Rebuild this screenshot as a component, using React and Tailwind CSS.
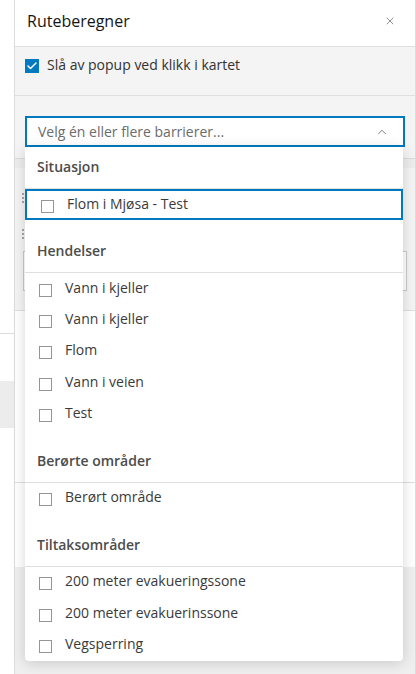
import { Check, X, ChevronUp } from 'lucide-react'

const GROUPS = [
  { title: 'Situasjon', items: ['Flom i Mjøsa - Test'], focused: 0 },
  { title: 'Hendelser', items: ['Vann i kjeller', 'Vann i kjeller', 'Flom', 'Vann i veien', 'Test'] },
  { title: 'Berørte områder', items: ['Berørt område'] },
  { title: 'Tiltaksområder', items: ['200 meter evakueringssone', '200 meter evakuerinssone', 'Vegsperring'] },
]

function Grip() {
  return (
    <div className="grid grid-cols-2 gap-x-[2px] gap-y-[2px] w-[6px]">
      {[0, 1, 2, 3, 4, 5].map(i => (
        <span key={i} className="w-[2px] h-[2px] rounded-full bg-[#8a8a8a]" />
      ))}
    </div>
  )
}

function OptionRow({ label, focused }) {
  return (
    <div
      className={`h-[31.25px] flex items-center pl-[14px] gap-[13px] ${
        focused ? 'border-2 border-[#0079c1] pl-[12px]' : ''
      }`}
    >
      <span className="w-[13px] h-[13px] mt-[3px] shrink-0 border border-[#959595] bg-white" />
      <span className="text-[14px] text-[#3a3a3a] leading-none -mt-[2px]">{label}</span>
    </div>
  )
}

function BarrierList() {
  return (
    <div className="absolute left-0 top-full w-[378px] z-10 bg-white rounded-b-[4px] shadow-[0_2px_14px_rgba(0,0,0,0.16)] flex flex-col gap-[11px]">
      {GROUPS.map(group => (
        <div key={group.title} className="flex flex-col">
          <div className="h-[42px] border-b border-[#dfdfdf] flex items-center pl-3 pb-[2px] text-[14px] font-semibold text-[#4c4c4c]">
            {group.title}
          </div>
          {group.items.map((item, i) => (
            <OptionRow key={i} label={item} focused={group.focused === i} />
          ))}
        </div>
      ))}
    </div>
  )
}

export default function App() {
  return (
    <div className="flex h-[674px] w-[416px] overflow-hidden bg-white font-['Open_Sans','Liberation_Sans',sans-serif]">
      <div className="w-[14px] shrink-0 flex flex-col">
        <div className="h-[334px] border-b border-[#dcdcdc]" />
        <div className="h-[47px]" />
        <div className="h-[47px] bg-[#ececec]" />
      </div>

      <div className="w-[402px] shrink-0 border-x border-[#dcdcdc] flex flex-col">
        <div className="h-[47px] border-b border-[#dfdfdf] flex items-center justify-between pl-3 pr-[19px] pb-[4px]">
          <span className="text-[16px] text-[#151515]">Ruteberegner</span>
          <X size={12} strokeWidth={1.5} className="text-[#6e6e6e]" />
        </div>

        <div className="h-[49px] border-b border-[#dfdfdf] bg-[#f4f4f4] flex items-start pl-[10px] pt-[9px] gap-2">
          <span className="w-[14px] h-[14px] mt-[3px] bg-[#0079c1] flex items-center justify-center">
            <Check size={12} strokeWidth={3} className="text-white" />
          </span>
          <span className="text-[14px] leading-[18px] text-[#323232]">Slå av popup ved klikk i kartet</span>
        </div>

        <div className="h-[215px] border-b border-[#dfdfdf] bg-[#f4f4f4] px-[10px] pt-[20px] flex flex-col">
          <div className="relative h-[31px] shrink-0">
            <div className="h-full border-2 border-[#0079c1] bg-white flex items-center justify-between pl-[11px] pr-[14px]">
              <span className="text-[14px] text-[#6b6b6b]">Velg én eller flere barrierer...</span>
              <ChevronUp size={14} strokeWidth={1.5} className="text-[#6b6b6b]" />
            </div>
            <BarrierList />
          </div>
          <div className="mt-[11px] -mx-[10px] h-[10px] border-t border-[#dcdcdc] bg-[#ededed]" />
          <div className="mt-[25px] -ml-[3px]"><Grip /></div>
          <div className="mt-[26px] -ml-[3px]"><Grip /></div>
          <div className="mt-[12px] -ml-[2px] -mr-[2px] h-[40px] border border-[#c9c9c9] bg-white" />
        </div>

        <div className="h-[172px] border-b border-[#dfdfdf] bg-white" />
        <div className="h-[84px] bg-white" />
        <div className="flex-1 bg-[#efefef]" />
      </div>
    </div>
  )
}
